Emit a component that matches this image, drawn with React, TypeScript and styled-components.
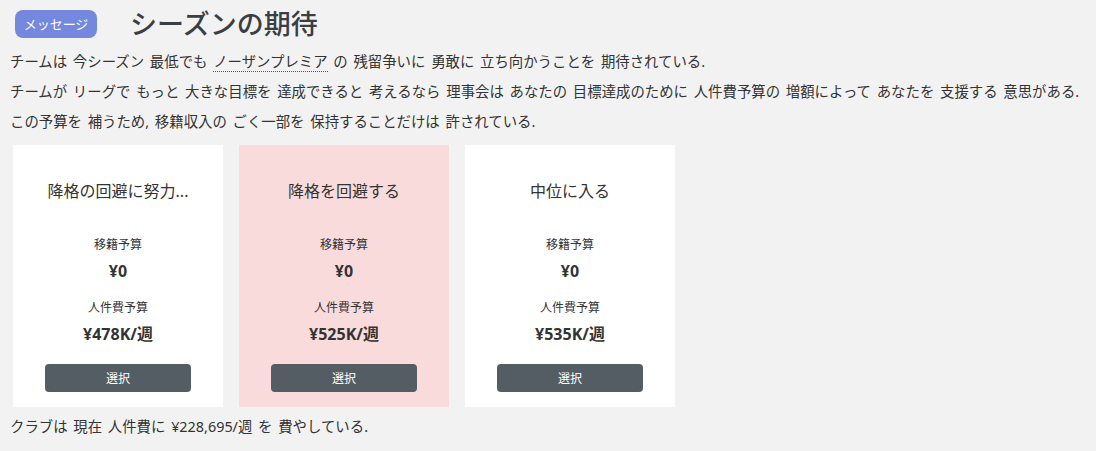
import React from "react";
import styled, { createGlobalStyle } from "styled-components";

const Global = createGlobalStyle`
  html, body { margin: 0; padding: 0; background: #f2f2f2; }
  body { font-family: "Noto Sans", "Noto Sans CJK JP", sans-serif; color: #333; }
`;

const Page = styled.div`
  padding: 0 10px;
`;

const Header = styled.div`
  display: flex;
  align-items: center;
  height: 47px;
`;

const Badge = styled.span`
  display: inline-flex;
  align-items: center;
  justify-content: center;
  margin-left: 5px;
  width: 82px;
  height: 28px;
  border-radius: 8px;
  background: #7489dd;
  color: #fff;
  font-size: 13px;
`;

const Title = styled.h1`
  margin: 0 0 0 33px;
  font-size: 27px;
  font-weight: 500;
  color: #3a3f44;
  line-height: 32px;
`;

const Para = styled.p`
  margin: 0;
  font-size: 14.4px;
  line-height: 30px;
  word-spacing: 2px;
  color: #333;
`;

const Term = styled.span`
  border-bottom: 1px dotted #555;
`;

const Cards = styled.div`
  display: flex;
  gap: 16px;
  margin: 8px 0 5px 3px;
`;

const Card = styled.div<{ $active?: boolean }>`
  width: 210px;
  box-sizing: border-box;
  padding: 34px 0 15px;
  display: flex;
  flex-direction: column;
  align-items: center;
  background: ${(p) => (p.$active ? "#fadbdc" : "#ffffff")};
`;

const CardTitle = styled.div`
  font-size: 16px;
  line-height: 24px;
  color: #333;
`;

const Label = styled.div<{ $top: number }>`
  margin-top: ${(p) => p.$top}px;
  font-size: 12px;
  line-height: 18px;
  color: #333;
`;

const Value = styled.div`
  margin-top: 5px;
  font-size: 16px;
  line-height: 24px;
  font-weight: 700;
  color: #333;
`;

const Button = styled.button`
  margin-top: 18px;
  width: 146px;
  height: 28px;
  border: none;
  border-radius: 4px;
  background: #555d64;
  color: #fff;
  font-family: inherit;
  font-size: 12px;
  cursor: pointer;
`;

const options = [
  { title: "降格の回避に努力...", transfer: "¥0", wage: "¥478K/週", active: false },
  { title: "降格を回避する", transfer: "¥0", wage: "¥525K/週", active: true },
  { title: "中位に入る", transfer: "¥0", wage: "¥535K/週", active: false },
];

export default function App() {
  return (
    <Page>
      <Global />
      <Header>
        <Badge>メッセージ</Badge>
        <Title>シーズンの期待</Title>
      </Header>
      <Para>
        チームは 今シーズン 最低でも <Term>ノーザンプレミア</Term> の 残留争いに 勇敢に 立ち向かうことを 期待されている.
      </Para>
      <Para>
        チームが リーグで もっと 大きな目標を 達成できると 考えるなら 理事会は あなたの 目標達成のために 人件費予算の 増額によって あなたを 支援する 意思がある.
      </Para>
      <Para>この予算を 補うため, 移籍収入の ごく一部を 保持することだけは 許されている.</Para>
      <Cards>
        {options.map((o) => (
          <Card key={o.title} $active={o.active}>
            <CardTitle>{o.title}</CardTitle>
            <Label $top={33}>移籍予算</Label>
            <Value>{o.transfer}</Value>
            <Label $top={16}>人件費予算</Label>
            <Value>{o.wage}</Value>
            <Button>選択</Button>
          </Card>
        ))}
      </Cards>
      <Para>クラブは 現在 人件費に ¥228,695/週 を 費やしている.</Para>
    </Page>
  );
}
